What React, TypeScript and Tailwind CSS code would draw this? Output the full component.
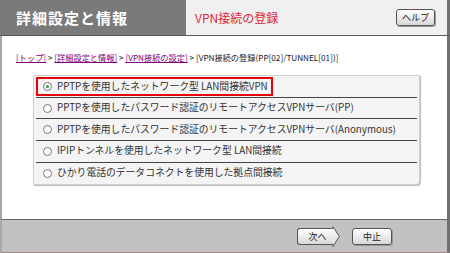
import React from "react";

const options = [
  "PPTPを使用したネットワーク型 LAN間接続VPN",
  "PPTPを使用したパスワード認証のリモートアクセスVPNサーバ(PP)",
  "PPTPを使用したパスワード認証のリモートアクセスVPNサーバ(Anonymous)",
  "IPIPトンネルを使用したネットワーク型 LAN間接続",
  "ひかり電話のデータコネクトを使用した拠点間接続",
];

const font = { fontFamily: '"Noto Sans CJK JP", "Noto Sans", sans-serif' };

const Radio = ({ checked }: { checked: boolean }) => (
  <span className="w-[9px] h-[9px] rounded-full border border-[#777] bg-white flex items-center justify-center shrink-0">
    {checked && <span className="w-[3px] h-[3px] rounded-full bg-[#3a9a3a]" />}
  </span>
);

const App = () => {
  return (
    <div className="w-[450px] h-[253px] flex flex-col overflow-hidden bg-white" style={font}>
      {/* header */}
      <div className="flex h-[36px] border-b border-[#5a5a5a] shrink-0">
        <div className="w-[186px] bg-[#7a7a7a] flex items-center pl-[16px]">
          <span className="text-white font-bold text-[15px] tracking-[1px] leading-none">詳細設定と情報</span>
        </div>
        <div className="flex-1 bg-[#f0f0f0] flex items-center pl-[9px] pr-[12px] border-r-[3px] border-[#707070]">
          <span className="text-[#e0283c] text-[12px] leading-none">VPN接続の登録</span>
          <div className="ml-auto w-[39px] h-[17px] rounded-[3px] border border-[#555] bg-gradient-to-b from-white to-[#d8d8d8] flex items-center justify-center shadow-[1px_1px_0_#999]">
            <span className="text-[9px] text-[#222] leading-none">ヘルプ</span>
          </div>
        </div>
      </div>

      {/* body */}
      <div className="flex-1 flex flex-col border-l-2 border-[#a8a8a8] border-r-[3px] border-r-[#707070] pl-[14px]">
        <div className="text-[8.2px] text-[#222] mt-[17px] leading-none whitespace-nowrap">
          <span className="text-[#800080] underline">[トップ]</span>
          {" > "}
          <span className="text-[#800080] underline">[詳細設定と情報]</span>
          {" > "}
          <span className="text-[#800080] underline">[VPN接続の設定]</span>
          {" > [VPN接続の登録(PP[02]/TUNNEL[01])]"}
        </div>

        <div className="mt-[14px] ml-[17px] w-[387px] bg-[#f4f4f4] border border-[#cfcfcf] rounded-br-[4px] shadow-[1px_1px_1px_#bbb] px-[2px]">
          {options.map((o, i) => (
            <div
              key={i}
              className={`h-[21.6px] flex items-center ${i < options.length - 1 ? "border-b border-[#444]" : ""}`}
            >
              <div
                className={`flex items-center gap-[5px] h-[19px] pl-[5px] pr-[3px] ${
                  i === 0 ? "border-2 border-[#e8000b]" : "border-2 border-transparent"
                }`}
              >
                <Radio checked={i === 0} />
                <span className="text-[9.8px] text-[#333] leading-none whitespace-nowrap">{o}</span>
              </div>
            </div>
          ))}
        </div>
      </div>

      {/* footer */}
      <div className="h-[34px] shrink-0 bg-[#c2c2c2] border-t border-[#666] border-l-2 border-l-[#a8a8a8] border-r-[3px] border-r-[#707070] border-b border-b-[#a08888] flex items-center pl-[295px] gap-[12px]">
        <div className="flex items-center">
          <div className="w-[36px] h-[17px] rounded-l-[3px] border border-r-0 border-[#555] bg-gradient-to-b from-white to-[#d8d8d8] flex items-center justify-center pl-[4px]">
            <span className="text-[9px] text-[#222] leading-none">次へ</span>
          </div>
          <svg width="8" height="21" viewBox="0 0 8 21" className="-ml-[1px]">
            <defs>
              <linearGradient id="ag" x1="0" y1="0" x2="0" y2="1">
                <stop offset="0" stopColor="#fff" />
                <stop offset="1" stopColor="#d8d8d8" />
              </linearGradient>
            </defs>
            <path d="M0 2 L1 2 L1 0 L7.5 10.5 L1 21 L1 19 L0 19 Z" fill="url(#ag)" />
            <path d="M0 2.5 L1 2.5 L1 0.5 L7.3 10.5 L1 20.5 L1 18.5 L0 18.5" fill="none" stroke="#555" strokeWidth="1" />
          </svg>
        </div>
        <div className="w-[40px] h-[17px] rounded-[3px] border border-[#555] bg-gradient-to-b from-white to-[#d8d8d8] flex items-center justify-center shadow-[1px_1px_0_#999]">
          <span className="text-[9px] text-[#222] leading-none">中止</span>
        </div>
      </div>
    </div>
  );
};

export default App;
